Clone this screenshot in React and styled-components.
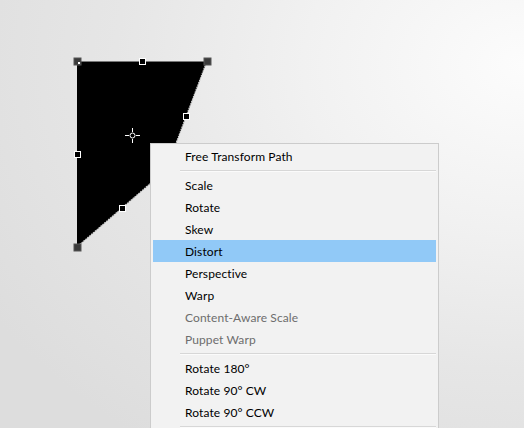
import React from "react";
import styled, { createGlobalStyle } from "styled-components";

const GlobalStyle = createGlobalStyle`
  html, body {
    margin: 0;
    padding: 0;
  }
  body {
    font-family: "Lato", "Open Sans", sans-serif;
  }
`;

const Canvas = styled.div`
  position: relative;
  width: 524px;
  height: 428px;
  overflow: hidden;
  background: radial-gradient(ellipse 120% 110% at 100% 15%, #fcfcfc 0%, #f1f1f1 35%, #e6e6e6 65%, #dddddd 100%);
`;

const Shape = styled.svg`
  position: absolute;
  left: 0;
  top: 0;
`;

const Menu = styled.ul`
  position: absolute;
  left: 150px;
  top: 143px;
  width: 287px;
  margin: 0;
  padding: 1px 0 0;
  list-style: none;
  background: #f2f2f2;
  border: 1px solid #cccccc;
  border-bottom: none;
  height: 300px;
`;

const Item = styled.li`
  height: 22px;
  margin: 0 2px;
  padding: 1px 0 0 32px;
  box-sizing: border-box;
  display: flex;
  align-items: center;
  font-size: 12px;
  letter-spacing: 0.1px;
  color: ${(p) => (p.disabled ? "#6d6d6d" : "#000")};
  background: ${(p) => (p.active ? "#91c9f7" : "transparent")};
`;

const Separator = styled.li`
  height: 7px;
  margin-left: 29px;
  margin-right: 2px;
  display: flex;
  align-items: center;

  &::before {
    content: "";
    flex: 1;
    height: 1px;
    background: #d7d7d7;
    box-shadow: 0 1px 0 #fbfbfb;
  }
`;

const entries = [
  { label: "Free Transform Path" },
  { sep: true },
  { label: "Scale" },
  { label: "Rotate" },
  { label: "Skew" },
  { label: "Distort", active: true },
  { label: "Perspective" },
  { label: "Warp" },
  { label: "Content-Aware Scale", disabled: true },
  { label: "Puppet Warp", disabled: true },
  { sep: true },
  { label: "Rotate 180°" },
  { label: "Rotate 90° CW" },
  { label: "Rotate 90° CCW" },
  { sep: true },
];

const Corner = ({ x, y }) => (
  <rect x={x - 3.5} y={y - 3.5} width="7" height="7" fill="#3a3a3a" stroke="#555" strokeWidth="1" />
);

const Mid = ({ x, y }) => (
  <rect x={x - 3} y={y - 3} width="6" height="6" fill="#000" stroke="#fff" strokeWidth="1" />
);

const PathShape = () => (
  <Shape width="524" height="428" viewBox="0 0 524 428">
    <polygon points="77,61 207,61 166,170 77,247" fill="#000" />
    <line x1="77" y1="61.5" x2="207" y2="61.5" stroke="#777" strokeWidth="1" />
    <line x1="207" y1="61" x2="166" y2="170" stroke="#d0d0d0" strokeWidth="1.3" strokeDasharray="1.5 1" />
    <line x1="166" y1="170" x2="77" y2="247" stroke="#d0d0d0" strokeWidth="1.3" strokeDasharray="1.5 1" />
    <Corner x={77.5} y={61.5} />
    <Corner x={207.5} y={61.5} />
    <Corner x={77.5} y={247.5} />
    <rect x="78" y="62" width="2" height="2" fill="#fff" />
    <Mid x={142.5} y={61.5} />
    <Mid x={77.5} y={154.5} />
    <Mid x={186.5} y={116.5} />
    <Mid x={122.5} y={208.5} />
    <g stroke="#fff" strokeWidth="1" fill="none">
      <circle cx="132.5" cy="135.5" r="2.5" />
      <line x1="125" y1="135.5" x2="129" y2="135.5" />
      <line x1="136" y1="135.5" x2="140" y2="135.5" />
      <line x1="132.5" y1="128" x2="132.5" y2="132" />
      <line x1="132.5" y1="139" x2="132.5" y2="143" />
    </g>
  </Shape>
);

export default function App() {
  return (
    <>
      <GlobalStyle />
      <Canvas>
        <PathShape />
        <Menu>
          {entries.map((e, i) =>
            e.sep ? (
              <Separator key={i} />
            ) : (
              <Item key={i} active={e.active} disabled={e.disabled}>
                {e.label}
              </Item>
            )
          )}
        </Menu>
      </Canvas>
    </>
  );
}
